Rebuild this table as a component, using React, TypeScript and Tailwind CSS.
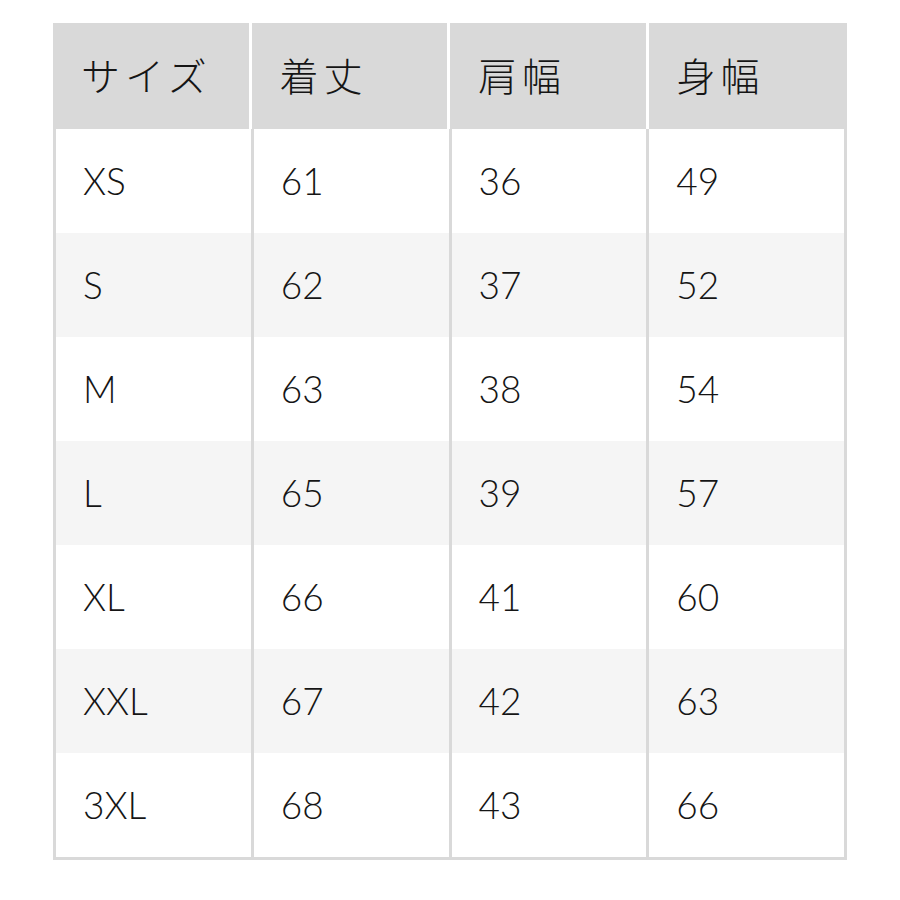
const headers = ["サイズ", "着丈", "肩幅", "身幅"];

const rows = [
  ["XS", "61", "36", "49"],
  ["S", "62", "37", "52"],
  ["M", "63", "38", "54"],
  ["L", "65", "39", "57"],
  ["XL", "66", "41", "60"],
  ["XXL", "67", "42", "63"],
  ["3XL", "68", "43", "66"],
];

export default function App() {
  return (
    <div className="w-[900px] h-[900px] bg-white pt-[23px] pl-[53px] text-[#151515] font-['Lato','Noto_Sans_CJK_JP',sans-serif]">
      <div className="w-[794px]">
        {/* header */}
        <div className="grid grid-cols-4 h-[106px] bg-[#d9d9d9]">
          {headers.map((h, i) => (
            <div
              key={h}
              className={
                "flex items-center pl-[28px] pb-[4px] text-[39px] font-['Noto_Sans_CJK_JP',sans-serif] font-light tracking-[5px] " +
                (i < 3 ? "border-r-[3px] border-white" : "")
              }
            >
              {h}
            </div>
          ))}
        </div>
        {/* body */}
        <div className="border-l-[3px] border-b-[3px] border-[#d9d9d9]">
          {rows.map((r, ri) => (
            <div
              key={r[0]}
              className={"grid grid-cols-4 h-[104px] " + (ri % 2 === 1 ? "bg-[#f5f5f5]" : "bg-white")}
            >
              {r.map((c, ci) => (
                <div
                  key={ci}
                  className="flex items-center pl-[27px] text-[37px] font-light border-r-[3px] border-[#d9d9d9]"
                >
                  {c}
                </div>
              ))}
            </div>
          ))}
        </div>
      </div>
    </div>
  );
}
